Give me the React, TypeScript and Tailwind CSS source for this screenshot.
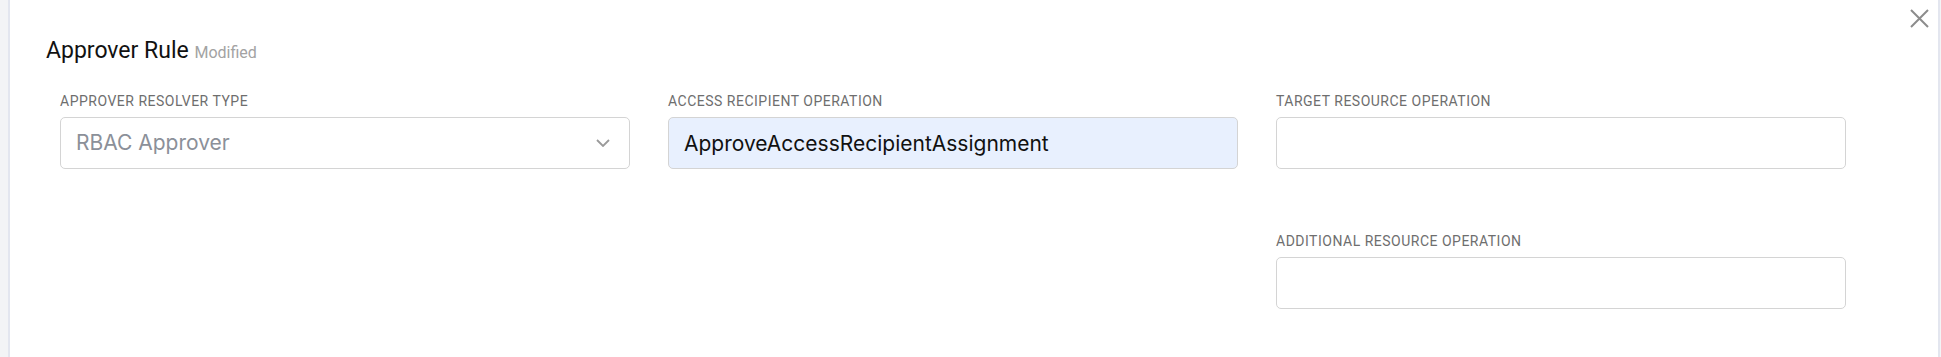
const labelClass =
  "block text-[14px] leading-[16px] tracking-[0.5px] uppercase text-[#6e6e6e] font-['Roboto',sans-serif] mb-[8px]"

const boxClass =
  "w-full h-[52px] rounded-[5px] border border-[#d4d4d4] px-[15px] text-[21px] font-['Inter',sans-serif] outline-none"

const Field = ({ label, value, filled }: { label: string; value?: string; filled?: boolean }) => (
  <div>
    <label className={labelClass}>{label}</label>
    <input
      readOnly
      value={value ?? ""}
      className={`${boxClass} ${filled ? "bg-[#e8f0fe] text-[#111]" : "bg-white"}`}
    />
  </div>
)

export default function App() {
  return (
    <div className="h-[357px] w-full bg-[#f3f4f6] pl-[8px] font-['Roboto',sans-serif]">
      <div className="relative h-full bg-white border-l-2 border-r-2 border-[#e3e6ef] mr-[1px]">
        {/* close */}
        <button className="absolute right-[9px] top-[9px] text-[#8c8c8c]">
          <svg width="19" height="19" viewBox="0 0 19 19" fill="none" stroke="currentColor" strokeWidth="2">
            <path d="M1 1 L18 18 M18 1 L1 18" />
          </svg>
        </button>

        <div className="pl-[36px] pt-[37px]">
          <h2 className="text-[23px] leading-[28px] text-[#111]">
            Approver Rule{" "}
            <span className="text-[16px] text-[#a3a3a3]">Modified</span>
          </h2>
        </div>

        <div className="grid grid-cols-3 gap-x-[38px] gap-y-[64px] pl-[50px] pr-[92px] pt-[26px]">
          <div>
            <label className={labelClass}>Approver Resolver Type</label>
            <div className={`${boxClass} flex items-center justify-between bg-white text-[#8b9099]`}>
              <span>RBAC Approver</span>
              <svg width="14" height="8" viewBox="0 0 14 8" fill="none" stroke="#9a9a9a" strokeWidth="1.8" className="mr-[4px]">
                <path d="M1 1 L7 7 L13 1" />
              </svg>
            </div>
          </div>
          <Field label="Access Recipient Operation" value="ApproveAccessRecipientAssignment" filled />
          <Field label="Target Resource Operation" />
          <div />
          <div />
          <Field label="Additional Resource Operation" />
        </div>
      </div>
    </div>
  )
}
